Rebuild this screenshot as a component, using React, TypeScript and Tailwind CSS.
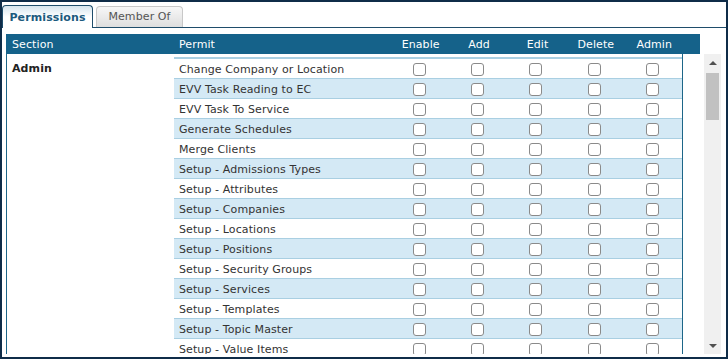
import React from "react";

const permits = [
  "Change Company or Location",
  "EVV Task Reading to EC",
  "EVV Task To Service",
  "Generate Schedules",
  "Merge Clients",
  "Setup - Admissions Types",
  "Setup - Attributes",
  "Setup - Companies",
  "Setup - Locations",
  "Setup - Positions",
  "Setup - Security Groups",
  "Setup - Services",
  "Setup - Templates",
  "Setup - Topic Master",
  "Setup - Value Items",
];

const actions = ["Enable", "Add", "Edit", "Delete", "Admin"];

function Box() {
  return (
    <div className="flex items-center justify-center pt-[2px]">
      <span className="block w-[13px] h-[13px] rounded-[3px] border border-[#8a8a8a] bg-white" />
    </div>
  );
}

export default function App() {
  return (
    <div
      className="w-[728px] h-[359px] border-2 border-[#0f2c48] bg-white text-[11px] text-[#333] tracking-[0.1px]"
      style={{ fontFamily: '"DejaVu Sans", Verdana, sans-serif' }}
    >
      {/* Tabs */}
      <div className="flex items-end h-[26px]">
        <div className="h-[23px] w-[91px] border-t border-l border-r border-[#1f4d6b] rounded-t-[4px] bg-gradient-to-b from-[#d6e5ee] via-white to-white flex items-center justify-center pt-[2px] font-bold text-[#1b5a7e]">
          Permissions
        </div>
        <div className="flex-1 h-full flex items-end border-b border-[#1f4d6b]">
          <div className="ml-[3px] h-[21px] w-[87px] border-t border-l border-r border-[#c8c8c8] rounded-t-[4px] bg-gradient-to-b from-[#f7f7f7] to-[#dedede] flex items-center justify-center pt-[1px] text-[#555]">
            Member Of
          </div>
        </div>
      </div>

      <div className="pl-[4px] pt-[6px]">
        {/* Header */}
        <div className="w-[694px] h-[20px] pt-[2px] bg-[#15628a] text-white grid grid-cols-[168px_216px_repeat(5,58.4px)_1fr] items-center">
          <div className="pl-[6px]">Section</div>
          <div className="pl-[5px]">Permit</div>
          {actions.map((a) => (
            <div key={a} className="text-center pl-[3px]">
              {a}
            </div>
          ))}
          <div />
        </div>

        {/* Body */}
        <div className="flex">
          <div className="w-[677px] h-[300px] border-l border-r border-[#1d6688] flex overflow-hidden">
            <div className="w-[167px] pt-[5px]">
              <div className="h-[20px] leading-[20px] pl-[5px] font-bold text-[#222]">Admin</div>
            </div>
            <div className="flex-1 pt-[3px]">
              <div className="border-t-2 border-[#a9cfe2]">
                {permits.map((p, i) => (
                  <div
                    key={p}
                    className={`h-[20px] border-b border-[#a9cfe2] grid grid-cols-[216px_repeat(5,1fr)] items-center ${
                      i % 2 === 1 ? "bg-[#d4e9f5]" : "bg-white"
                    }`}
                  >
                    <div className="pl-[5px] pt-[3px] whitespace-nowrap">{p}</div>
                    {actions.map((a) => (
                      <Box key={a} />
                    ))}
                  </div>
                ))}
              </div>
            </div>
          </div>

          {/* Scrollbar */}
          <div className="ml-[21px] w-[17px] h-[300px] bg-[#f0f0f0] flex flex-col items-center">
            <div className="h-[17px] flex items-center justify-center">
              <span className="block w-0 h-0 border-l-[4px] border-r-[4px] border-b-[4px] border-l-transparent border-r-transparent border-b-[#505050]" />
            </div>
            <div className="mt-[2px] w-[13px] h-[47px] bg-[#c1c1c1]" />
            <div className="flex-1" />
            <div className="h-[17px] flex items-center justify-center">
              <span className="block w-0 h-0 border-l-[4px] border-r-[4px] border-t-[4px] border-l-transparent border-r-transparent border-t-[#505050]" />
            </div>
          </div>
        </div>
      </div>
    </div>
  );
}
